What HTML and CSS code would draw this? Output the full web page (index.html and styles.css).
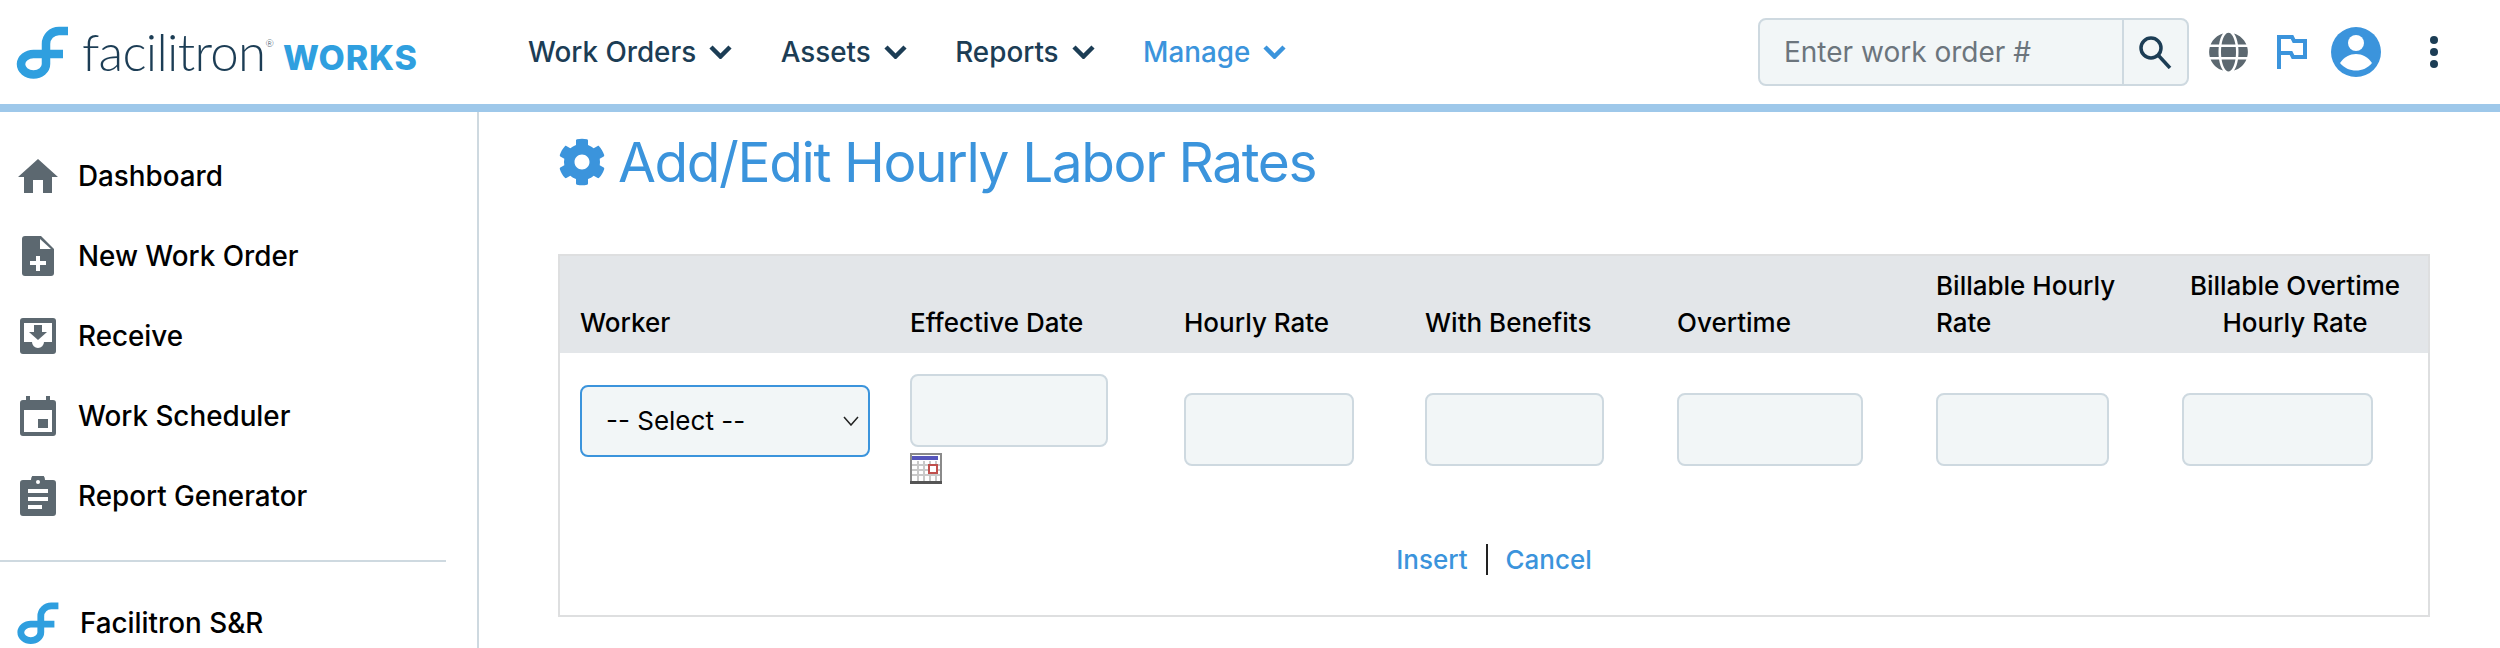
FILE: index.html
```html
<!DOCTYPE html>
<html lang="en">
<head>
<meta charset="utf-8">
<title>Add/Edit Hourly Labor Rates</title>
<link rel="stylesheet" href="styles.css">
</head>
<body>
<header class="topbar">
  <a class="brand" href="#">
    <svg class="brand-mark" viewBox="15 24 55 55"><path d="M68 30H59A13 13 0 0 0 46 43V63A12.5 10.5 0 0 1 21 63A12.5 10.5 0 0 1 33.500 53H63"/></svg>
    <span class="brand-name">facilitron<sup class="brand-reg">®</sup></span>
    <span class="brand-works">WORKS</span>
  </a>
  <nav class="mainnav">
    <a class="navlink" href="#">Work Orders<svg class="chev" viewBox="0 0 23 14"><path d="M2 2L11.500 11.500L21 2"/></svg></a>
    <a class="navlink" href="#">Assets<svg class="chev" viewBox="0 0 23 14"><path d="M2 2L11.500 11.500L21 2"/></svg></a>
    <a class="navlink" href="#">Reports<svg class="chev" viewBox="0 0 23 14"><path d="M2 2L11.500 11.500L21 2"/></svg></a>
    <a class="navlink navlink-active" href="#">Manage<svg class="chev" viewBox="0 0 23 14"><path d="M2 2L11.500 11.500L21 2"/></svg></a>
  </nav>
  <div class="tools">
    <form class="search">
      <input class="search-input" type="text" placeholder="Enter work order #">
      <button class="search-btn" type="button" aria-label="Search">
        <svg class="search-icon" viewBox="0 0 33 33"><circle cx="12" cy="12" r="10"/><path d="M19.500 19.500L31 32"/></svg>
      </button>
    </form>
    <svg class="tool-globe" viewBox="0 0 496 512"><path d="M336.500 160C322 70.700 287.800 8 248 8s-74 62.700-88.500 152h177zM152 256c0 22.200 1.200 43.500 3.300 64h185.300c2.100-20.500 3.300-41.800 3.300-64s-1.200-43.500-3.300-64H155.300c-2.100 20.500-3.300 41.800-3.300 64zm324.700-96c-28.600-67.900-86.500-120.400-158-141.600 24.400 33.800 41.200 84.700 50 141.600h108zM177.200 18.400C105.800 39.600 47.800 92.100 19.300 160h108c8.700-56.900 25.500-107.800 49.900-141.600zM487.400 192H372.700c2.100 21 3.300 42.500 3.300 64s-1.200 43-3.300 64h114.600c5.500-20.500 8.600-41.800 8.600-64s-3.100-43.500-8.500-64zM120 256c0-21.500 1.200-43 3.300-64H8.600C3.200 212.500 0 233.800 0 256s3.200 43.500 8.600 64h114.600c-2-21-3.200-42.500-3.200-64zm39.500 96c14.500 89.300 48.700 152 88.500 152s74-62.700 88.500-152h-177zm159.300 141.600c71.400-21.200 129.400-73.700 158-141.600h-108c-8.800 56.900-25.600 107.800-50 141.600zM19.300 352c28.600 67.900 86.500 120.400 158 141.600-24.400-33.800-41.200-84.700-50-141.600h-108z"/></svg>
    <svg class="tool-flag" viewBox="0 0 30 34"><path d="M2 34V2H15L17 6H28V22H16L14 18H2"/></svg>
    <svg class="tool-user" viewBox="0 0 50 50"><circle class="user-bg" cx="25" cy="25" r="25"/><circle class="user-fg" cx="25" cy="16" r="8"/><path class="user-fg" d="M9 36C13 30 19 27 25 27C31 27 37 30 41 36C37 41 31 43.500 25 43.500C19 43.500 13 41 9 36Z"/></svg>
    <svg class="tool-more" viewBox="0 0 8 32"><circle cx="4" cy="4" r="4"/><circle cx="4" cy="16" r="4"/><circle cx="4" cy="28" r="4"/></svg>
  </div>
</header>
<div class="shell">
  <aside class="sidebar">
    <a class="sideitem" href="#">
      <span class="sideicon"><svg class="icon-home" viewBox="0 0 40 34"><path d="M20 0L40 18H34V34H25V21H15V34H6V18H0Z"/></svg></span>Dashboard</a>
    <a class="sideitem" href="#">
      <span class="sideicon"><svg class="icon-doc" viewBox="0 0 32 40"><path d="M3 0H19L32 13V37A3 3 0 0 1 29 40H3A3 3 0 0 1 0 37V3A3 3 0 0 1 3 0Z"/><path class="icon-cut" d="M18 3L29 13H18ZM14 20H18V25H24V29H18V35H14V29H8V25H14Z"/></svg></span>New Work Order</a>
    <a class="sideitem" href="#">
      <span class="sideicon"><svg class="icon-box" viewBox="0 0 36 36"><rect width="36" height="36" rx="3"/><path class="icon-cut" d="M4 5H32V24H24A6 6 0 0 1 12 24H4Z"/><path d="M14 7H22V14H27L18 22L9 14H14Z"/></svg></span>Receive</a>
    <a class="sideitem" href="#">
      <span class="sideicon"><svg class="icon-cal" viewBox="0 0 36 40"><path d="M6 0H10V4H26V0H30V4H33A3 3 0 0 1 36 7V37A3 3 0 0 1 33 40H3A3 3 0 0 1 0 37V7A3 3 0 0 1 3 4H6Z"/><rect class="icon-cut" x="4" y="14" width="28" height="22"/><rect x="18" y="23" width="10" height="9"/></svg></span>Work Scheduler</a>
    <a class="sideitem" href="#">
      <span class="sideicon"><svg class="icon-cal" viewBox="0 0 36 40"><path d="M3 4H11A7 7 0 0 1 25 4H33A3 3 0 0 1 36 7V37A3 3 0 0 1 33 40H3A3 3 0 0 1 0 37V7A3 3 0 0 1 3 4Z"/><path class="icon-cut" d="M8 13H28V17H8ZM8 21H28V25H8ZM8 29H22V33H8Z"/><circle class="icon-cut" cx="18" cy="6" r="2"/></svg></span>Report Generator</a>
    <hr class="sidedivider">
    <a class="sideitem sideitem-brand" href="#">
      <span class="sideicon"><svg class="brand-mark-small" viewBox="15 24 55 55"><path d="M68 30H59A13 13 0 0 0 46 43V63A12.5 10.5 0 0 1 21 63A12.5 10.5 0 0 1 33.500 53H63"/></svg></span>Facilitron S&amp;R</a>
  </aside>
  <main class="content">
    <h1 class="pagetitle">
      <svg class="gear" viewBox="0 0 512 512"><path d="M487.400 315.700l-42.600-24.600c4.300-23.200 4.300-47 0-70.200l42.600-24.600c4.900-2.800 7.100-8.600 5.500-14-11.100-35.600-30-67.800-54.700-94.600-3.800-4.100-10-5.100-14.800-2.300L380.800 110c-17.900-15.400-38.500-27.300-60.800-35.100V25.800c0-5.600-3.900-10.500-9.400-11.700-36.700-8.200-74.300-7.800-109.200 0-5.500 1.200-9.400 6.100-9.400 11.700V75c-22.200 7.900-42.800 19.800-60.800 35.100L88.700 85.500c-4.900-2.800-11-1.900-14.800 2.300-24.700 26.700-43.600 58.900-54.700 94.600-1.700 5.400.6 11.200 5.500 14L67.300 221c-4.300 23.200-4.300 47 0 70.200l-42.600 24.600c-4.900 2.800-7.100 8.600-5.500 14 11.100 35.600 30 67.800 54.700 94.600 3.800 4.100 10 5.100 14.800 2.300l42.600-24.600c17.900 15.400 38.500 27.300 60.800 35.100v49.200c0 5.600 3.900 10.500 9.400 11.700 36.700 8.200 74.300 7.800 109.200 0 5.500-1.200 9.400-6.100 9.400-11.700v-49.200c22.200-7.900 42.800-19.800 60.800-35.100l42.600 24.600c4.900 2.800 11 1.900 14.800-2.300 24.700-26.700 43.600-58.900 54.700-94.600 1.500-5.500-.7-11.300-5.600-14.100zM256 336c-44.100 0-80-35.900-80-80s35.900-80 80-80 80 35.900 80 80-35.900 80-80 80z"/></svg>
      Add/Edit Hourly Labor Rates
    </h1>
    <section class="panel">
      <table class="rates">
        <colgroup>
          <col class="col-worker"><col class="col-date"><col class="col-rate"><col class="col-benefits"><col class="col-overtime"><col class="col-billable"><col class="col-billover">
        </colgroup>
        <thead>
          <tr>
            <th>Worker</th>
            <th>Effective Date</th>
            <th>Hourly Rate</th>
            <th>With Benefits</th>
            <th>Overtime</th>
            <th>Billable Hourly<br>Rate</th>
            <th class="th-center">Billable Overtime<br>Hourly Rate</th>
          </tr>
        </thead>
        <tbody>
          <tr>
            <td><select class="select"><option>-- Select --</option></select></td>
            <td>
              <input class="field field-date" type="text">
              <svg class="picker" viewBox="0 0 32 31">
                <rect width="32" height="31" fill="#8a8a8a"/>
                <rect x="2" y="2" width="28" height="26" fill="#fff"/>
                <rect x="2" y="3" width="26" height="4" fill="#5555bb"/>
                <path class="picker-grid" d="M2 12H30M2 17H30M2 22H30M8 8V28M14 8V28M20 8V28M26 8V28"/>
                <rect class="picker-day" x="19" y="12" width="8" height="8"/>
                <rect y="28" width="32" height="3" fill="#555"/>
              </svg>
            </td>
            <td><input class="field field-rate" type="text"></td>
            <td><input class="field field-benefits" type="text"></td>
            <td><input class="field field-overtime" type="text"></td>
            <td><input class="field field-billable" type="text"></td>
            <td><input class="field field-billover" type="text"></td>
          </tr>
        </tbody>
      </table>
      <div class="actions">
        <a class="action" href="#">Insert</a>
        <span class="action-sep"></span>
        <a class="action" href="#">Cancel</a>
      </div>
    </section>
  </main>
</div>
</body>
</html>
```
FILE: styles.css
```css
* { box-sizing: border-box; }
html, body { margin: 0; height: 648px; overflow: hidden; background: #fff; }
body { font-family: Inter, "Liberation Sans", sans-serif; color: #000; }
a { text-decoration: none; color: inherit; }

.topbar {
  display: flex;
  align-items: center;
  height: 112px;
  border-bottom: 8px solid #9ec8ea;
  padding-right: 62px;
  background: #fff;
}
.brand { display: flex; align-items: center; width: 528px; flex: none; padding-left: 15px; }
.brand-mark { width: 55px; height: 55px; flex: none; fill: none; stroke: #2f9fdf; stroke-width: 8.500; }
.brand-name {
  font-family: Lato, sans-serif;
  font-weight: 300;
  font-size: 51px;
  letter-spacing: -0.7px;
  color: #1c3d55;
  margin-left: 12px;
  position: relative;
  top: -1px;
  width: 201px;
}
.brand-reg { font-size: 10px; vertical-align: 24px; line-height: 0; }
.brand-works { font-family: Inter, sans-serif; font-weight: 800; font-size: 34px; letter-spacing: 0.8px; color: #2f9fdf; position: relative; top: 5px; }

.mainnav { display: flex; align-items: center; gap: 48.500px; }
.navlink { display: flex; align-items: center; gap: 13px; font-size: 27.800px; font-weight: 500; color: #1c3d55; }
.navlink-active { color: #3b94dc; }
.chev { width: 23px; height: 14px; fill: none; stroke: currentColor; stroke-width: 4.500; }

.tools { display: flex; align-items: center; margin-left: auto; }
.search { display: flex; width: 431px; height: 68px; border: 2px solid #ced9e0; border-radius: 8px; background: #f2f6f7; }
.search-input {
  flex: 1;
  min-width: 0;
  border: 0;
  background: transparent;
  padding: 0 0 0 24px;
  font: 400 28px Inter, sans-serif;
  outline: none;
}
.search-input::placeholder { color: #6c757d; opacity: 1; }
.search-btn { display: flex; align-items: center; justify-content: center; width: 65px; border: 0; border-left: 2px solid #ced9e0; background: transparent; padding: 0; }
.search-icon { width: 33px; height: 33px; fill: none; stroke: #1c3d55; stroke-width: 3.500; }
.tool-globe { width: 39px; height: 40px; fill: #5c6870; margin-left: 20px; }
.tool-flag { width: 30px; height: 34px; fill: none; stroke: #3b94dc; stroke-width: 4; margin-left: 29px; }
.tool-user { width: 50px; height: 50px; margin-left: 24px; }
.user-bg { fill: #3b94dc; }
.user-fg { fill: #fff; }
.tool-more { width: 8px; height: 32px; fill: #1c3d55; margin-left: 49px; }

.shell { display: flex; height: 536px; }
.sidebar { width: 479px; flex: none; border-right: 2px solid #ced9e0; padding-top: 24px; }
.sideitem { display: flex; align-items: center; height: 80px; padding-left: 18px; font-size: 27.800px; font-weight: 500; color: #000; }
.sideicon { display: flex; justify-content: center; width: 40px; margin-right: 20px; flex: none; }
.sideicon svg { fill: #5c6870; }
.sideicon .icon-cut { fill: #fff; }
.icon-home { width: 40px; height: 34px; }
.icon-doc { width: 32px; height: 40px; }
.icon-box { width: 36px; height: 36px; }
.icon-cal { width: 36px; height: 40px; }
.sidedivider { height: 2px; border: 0; background: #ced9e0; width: 446px; margin: 24px 0 21px; }
.sideitem-brand .sideicon { margin-right: 22px; }
.sideicon .brand-mark-small { width: 44px; height: 44px; flex: none; fill: none; stroke: #2f9fdf; stroke-width: 8.500; }

.content { flex: 1; min-width: 0; padding: 20px 70px 0 79px; }
.pagetitle {
  display: flex;
  align-items: center;
  gap: 12px;
  height: 60px;
  margin: 0 0 62px;
  font-size: 55px;
  font-weight: 400;
  letter-spacing: -1.4px;
  color: #3b94dc;
}
.gear { width: 48px; height: 48px; fill: #3b94dc; flex: none; }

.panel { height: 363px; border: 2px solid #dedfe0; }
.rates { width: 100%; border-collapse: collapse; table-layout: fixed; }
.col-worker { width: 330px; }
.col-date { width: 274px; }
.col-rate { width: 241px; }
.col-benefits { width: 252px; }
.col-overtime { width: 259px; }
.col-billable { width: 246px; }
.col-billover { width: 266px; }
.rates th {
  background: #e3e6e9;
  height: 97px;
  padding: 0 0 12px 20px;
  font-size: 26px;
  line-height: 37px;
  font-weight: 500;
  text-align: left;
  vertical-align: bottom;
  white-space: nowrap;
}
.rates .th-center { text-align: center; padding-right: 0; padding-left: 0; }
.rates td { padding: 21px 0 0 20px; vertical-align: middle; }

.field {
  display: block;
  height: 73px;
  border: 2px solid #ced9e0;
  border-radius: 8px;
  background: #f2f6f7;
  outline: none;
  padding: 0;
}
.field-date { width: 198px; }
.field-rate { width: 170px; }
.field-benefits { width: 179px; }
.field-overtime { width: 186px; }
.field-billable { width: 173px; }
.field-billover { width: 191px; }
.select {
  display: block;
  width: 290px;
  height: 72px;
  margin-bottom: 17px;
  border: 2px solid #3b94dc;
  border-radius: 8px;
  padding: 0 0 0 24px;
  font: 400 26px Inter, sans-serif;
  color: #000;
  appearance: none;
  -webkit-appearance: none;
  background: #f2f6f7 url("data:image/svg+xml,%3Csvg xmlns='http://www.w3.org/2000/svg' width='16' height='10'%3E%3Cpath d='M1 1L8 9L15 1' fill='none' stroke='%23222' stroke-width='1.500'/%3E%3C/svg%3E") no-repeat right 9px center;
}
.picker { display: block; width: 32px; height: 31px; margin-top: 6px; }
.picker-grid { stroke: #c9c9c9; stroke-width: 2; fill: none; }
.picker-day { fill: #fff; stroke: #c0504d; stroke-width: 2; }

.actions { display: flex; justify-content: center; align-items: center; gap: 18px; margin-top: 60px; }
.action { font-size: 26px; font-weight: 500; color: #3b94dc; }
.action-sep { width: 2px; height: 31px; background: #222; }
```
